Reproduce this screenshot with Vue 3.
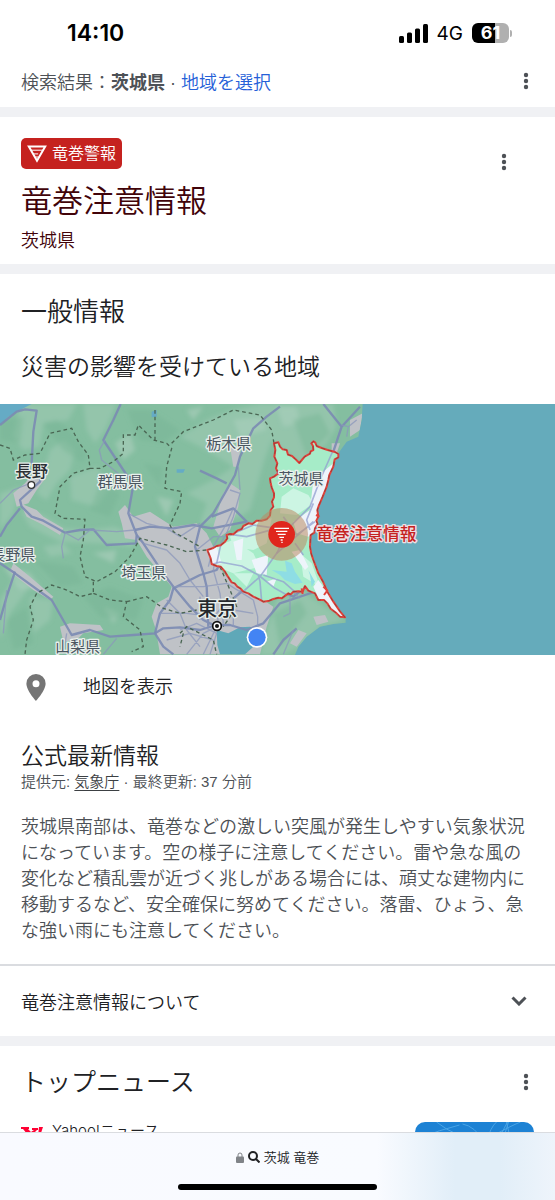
<template>
  <div class="screen">
    <header class="status-bar">
      <span class="clock">14:10</span>
      <div class="status-right">
        <svg class="signal" viewBox="0 0 29 19" aria-hidden="true">
          <rect x="0" y="12" width="5" height="7" rx="1.5" />
          <rect x="8" y="8.5" width="5" height="10.5" rx="1.5" />
          <rect x="16" y="4.5" width="5" height="14.5" rx="1.5" />
          <rect x="24" y="0" width="5" height="19" rx="1.5" />
        </svg>
        <span class="network">4G</span>
        <div class="battery">
          <span class="battery-body">61</span>
          <span class="battery-tip"></span>
        </div>
      </div>
    </header>

    <main class="content">
      <section class="region-bar">
        <p class="region-text">検索結果：<b>茨城県</b> · <a href="#region">地域を選択</a></p>
        <button class="icon-btn" type="button" aria-label="メニュー">
          <svg class="dots" viewBox="0 0 6 18"><circle v-for="y in dots" :key="y" cx="3" :cy="y" r="2.2" /></svg>
        </button>
      </section>

      <section class="alert-card">
        <div class="alert-main">
          <div class="badge">
            <svg class="badge-icon" viewBox="0 0 20 18" aria-hidden="true">
              <path d="M1.8 1.5h16.4L10 15.8z" />
              <path class="badge-bars" d="M4 5.2h12M6.2 8.9h5M8.500 12h3" />
            </svg>
            <span class="badge-text">竜巻警報</span>
          </div>
          <h1 class="alert-title">竜巻注意情報</h1>
          <p class="alert-area">茨城県</p>
        </div>
        <button class="icon-btn alert-menu" type="button" aria-label="メニュー">
          <svg class="dots" viewBox="0 0 6 18"><circle v-for="y in dots" :key="y" cx="3" :cy="y" r="2.2" /></svg>
        </button>
      </section>

      <section class="general">
        <h2 class="general-title">一般情報</h2>
        <h3 class="sub-title">災害の影響を受けている地域</h3>
      </section>

      <svg class="map" viewBox="0 12 1665 753" preserveAspectRatio="xMidYMid slice" role="img" aria-label="茨城県の地図">
        <defs>
          <clipPath id="pref"><path :d="prefecture" /></clipPath>
          <clipPath id="land"><path :d="land" /></clipPath>
          <filter id="soften"><feGaussianBlur stdDeviation="6" /></filter>
        </defs>
        <rect y="0" width="1665" height="780" fill="#65abbb" />
        <path :d="land" fill="#84bea0" />

        <g clip-path="url(#land)">
          <!-- lower ground and valleys -->
          <g filter="url(#soften)">
            <path class="plain" d="M60 12H230L205 60 130 70 120 140 70 150 40 110ZM150 150L190 120 225 150 210 210 170 250 140 300 110 280 130 220ZM250 12H350L315 90 285 130 260 90ZM540 110L620 60 700 30 780 12H1000L1010 80 980 130 900 190 850 150 815 120 790 190 750 330 720 350 640 380 600 370 620 310 560 280 640 240 700 200 620 150ZM210 230L290 200 330 260 290 320 215 300ZM0 280L60 260 40 340 0 390ZM60 330L130 345 190 385 270 390 340 380 400 400 400 440 300 430 180 425 90 380ZM130 440L190 430 215 460 150 470ZM0 600L40 540 90 560 30 640 0 720ZM90 590L160 600 150 660 100 700ZM830 600L900 570 1035 660 960 680 900 740 850 765H780L800 690Z" />
            <path class="plain bright" d="M345 130L390 100 405 150 370 180ZM560 30L610 20 580 60ZM470 290L520 300 500 350ZM10 500L90 520 120 560 60 570ZM280 460L350 450 340 490ZM310 620L360 640 340 670ZM700 60L790 50 800 90 720 110ZM830 20L890 20 900 70 850 80Z" />
            <path class="hill" d="M130 70L170 60 210 90 260 160 250 190 190 150ZM380 30L450 30 540 90 490 130 420 120ZM300 250L360 280 330 350 270 330ZM0 60L70 50 60 130 0 120ZM100 480L220 500 250 550 180 560ZM20 660L80 620 100 730 40 750ZM430 190L490 200 480 260ZM250 590L330 560 430 600 410 660 300 650ZM880 60L960 40 990 100 920 170ZM820 640L900 600 920 640 840 740Z" />
          </g>
          <!-- built-up area -->
          <path class="town" d="M40 280L75 250 125 190 140 230 110 270 85 310 50 320ZM60 310L110 330 130 350 190 385 180 405 130 375 80 350ZM355 335L375 315 400 350 450 335 480 355 520 380 590 370 620 400 640 440 630 470 680 530 740 570 790 600 820 620 800 680 780 763H480L468 690 455 650 470 610 505 590 515 560 490 530 440 470 410 420 375 415 365 370ZM180 680L210 670 300 675 310 690 250 700 230 720 190 725ZM640 380L670 280 690 250 720 270 715 320 690 390 660 410ZM690 140L720 150 715 200 700 200ZM40 490L90 530 160 590 150 600 100 570 30 515ZM940 650L975 645 985 665 950 675ZM895 690L920 700 890 740 870 730ZM1050 60L1088 40 1080 90 1050 110ZM995 130L1020 130 1010 160 995 160Z" />
          <path class="water" d="M0 12H95L50 35 25 50 0 75ZM455 35L470 30 470 50 455 52ZM530 208L555 208 550 218 530 218Z" />
          <path d="M650 690L685 700 720 682 750 680 775 692 785 710 760 740 735 763H660L652 735Z" fill="#5fa8b8" />
        </g>

        <g class="road wide">
          <path d="M0 75L50 35 75 28 110 32 100 95 95 190 125 205 120 245 60 300 65 320 95 350 130 362 195 398 240 390 280 388 320 435 408 430 410 405 385 340 400 255 370 210 310 120 340 60 362 12" />
          <path d="M0 410L20 375 60 325M0 490L45 520 155 600 215 705 270 690 330 710 400 705 465 700 480 640 510 600 520 565 600 525 650 510 660 490 725 498 775 525 825 565 880 590 905 570" />
          <path d="M410 405L430 430 490 520 520 560 570 620 610 660 650 680M405 390L450 380 520 385 580 375 635 385 740 365 700 325 635 350M600 380L585 440 610 520 620 560 625 680" />
          <path d="M720 170L705 225 680 270 640 340 600 380M720 170L760 85 800 50 840 20M700 595L780 530 830 460 890 390 940 310 985 200 1025 80 1080 20M1025 80L970 12M465 700L490 740 520 763M465 700L490 685 540 682 600 690 650 675 690 675 740 690 790 670 840 610 960 570M0 660L20 590 45 515M820 763L850 720 890 685" />
          <path d="M600 212L650 235 680 250" />
        </g>
        <g class="road">
          <path d="M0 310L40 270 90 250M315 120L298 150 305 180 330 200 360 225M195 400L185 440 190 475M195 398L235 420 270 390 350 395 405 390M385 340L440 370 500 385 540 410 600 370M430 430L500 450 540 490 570 540 610 590M690 270L720 280 700 350 680 400 650 450 640 510M700 325L680 370 640 440 625 500M715 200L720 270M740 365L820 385 880 400M640 510L660 580 670 670M520 560L610 560 680 550 760 600 773 650 773 700M590 450L640 410 740 410 830 385M500 600L540 640 560 690 600 740M600 590L600 660M480 640L560 640 640 650 700 630 760 640M310 763L350 715M200 700L190 763M10 700L20 570M560 763L610 700 650 680 610 763M500 720L570 700 640 720M730 560L700 600 700 680M830 530L900 595M900 440L840 380 940 365M960 350L890 390 850 450M1040 110L1045 80 1070 60M1045 80L1025 75M870 590L870 640 850 650M690 590L650 640 660 690M540 690L590 670 650 700 630 763M880 690L850 763M790 530L840 550" />
        </g>
        <g class="border-line">
          <path d="M0 135L30 145 40 180 75 165 120 160 150 100 215 85 235 125 265 165 270 205 300 205 340 185 370 160 370 105 405 105 415 75 460 120 500 130 515 145 500 200 495 265 545 275 540 310 510 375 520 395 600 440M465 30L465 120M515 130L550 95 640 60 700 30 780 45 815 90 822 130M270 205L220 220 180 260 165 340 190 355 255 358 250 420 240 470 255 530 290 545 345 515 390 470 420 415 500 435 560 455 620 450M280 545L280 580 240 590 200 570 155 555 110 580 90 620 100 660 80 720 75 763M280 580L330 600 380 605 370 650 420 690 430 740 395 755M380 605L440 590 490 625 540 640 590 630M540 700L560 680 600 700 640 720 650 763M550 700L540 740M660 500L690 570 710 620 670 680" />
        </g>

        <!-- highlighted prefecture -->
        <path :d="prefecture" fill="#a6ecc8" />
        <g clip-path="url(#pref)">
          <path d="M845 290L880 265 925 285 940 310 890 345 840 340ZM750 365L815 355 800 430 760 450 700 440 690 410ZM640 440L700 420 760 460 780 500 700 520 650 500ZM700 520L760 520 740 560ZM900 460L935 490 960 560 910 530Z" fill="#ccf5e3" />
          <path d="M940 240L1000 190 955 330 955 380 925 410 890 400 880 365 930 330ZM620 445L650 440 665 490 635 495ZM755 480L805 465 800 525 770 520ZM700 425L730 415 725 480 710 480ZM800 545L830 535 820 560ZM955 540L1040 655 1010 650 960 605 940 560ZM875 455L900 450 925 500 915 510Z" fill="#eef4fb" />
          <path d="M815 510L860 515 855 482 875 490 885 515 908 548 885 552 855 540 840 525ZM930 525L925 510 945 545 935 560Z" fill="#8edde4" />
          <g class="road inside">
            <path d="M640 492L660 486 725 498 775 525 825 565 870 590M690 610L780 530 830 460 870 380 930 320 960 240 1000 150M775 525L780 545 785 605" />
            <path d="M690 405L760 375 830 385M650 490L670 400 740 410 830 385M790 525L850 545 890 580M830 460L940 365M850 350L890 405 945 365M885 430L910 465M940 310L920 360 930 390" />
          </g>
        </g>
        <path :d="prefecture" class="outline" />
        <path :d="prefecture" class="outline-dash" />
        <path d="M970 560L982 572 972 585M948 345L958 350M905 565L908 582" class="outline" />

        <circle cx="845" cy="403" r="79" fill="#b98a62" fill-opacity=".55" />
        <circle cx="845" cy="403" r="40" fill="#e0261d" />
        <path d="M823 385H867M828 394H862M833 403H857M838 412H852M842 420H848M844 427H848" class="pin-lines" />

        <circle cx="94" cy="255" r="10" fill="#fff" stroke="#333" stroke-width="4" />
        <circle cx="651" cy="678" r="13" fill="#fff" stroke="#111" stroke-width="5" />
        <circle cx="651" cy="678" r="6" fill="#111" />
        <circle cx="771" cy="712" r="31" fill="#fff" />
        <circle cx="771" cy="712" r="26" fill="#4384f4" />

        <text
          v-for="label in labels"
          :key="label.text"
          :x="label.x"
          :y="label.y"
          class="map-label"
          :class="label.kind"
        >{{ label.text }}</text>
      </svg>

      <a class="show-map" href="#map">
        <svg class="place" viewBox="0 0 20 27" aria-hidden="true">
          <path fill-rule="evenodd" d="M10 0a9.600 9.600 0 0 0-9.600 9.600C.4 16.800 10 27 10 27s9.600-10.200 9.600-17.400A9.600 9.600 0 0 0 10 0zm0 6.200a3.500 3.500 0 1 1 0 7 3.500 3.500 0 0 1 0-7z" />
        </svg>
        地図を表示
      </a>

      <section class="official">
        <h3 class="sub-title">公式最新情報</h3>
        <p class="source">提供元: <a href="#jma">気象庁</a> · 最終更新: 37 分前</p>
        <p class="body-text">茨城県南部は、竜巻などの激しい突風が発生しやすい気象状況になっています。空の様子に注意してください。雷や急な風の変化など積乱雲が近づく兆しがある場合には、頑丈な建物内に移動するなど、安全確保に努めてください。落雷、ひょう、急な強い雨にも注意してください。</p>
      </section>

      <button class="about" type="button">
        <span>竜巻注意情報について</span>
        <svg class="chevron" viewBox="0 0 16 10" aria-hidden="true"><path d="M1.5 1.5L8 8l6.500-6.500" /></svg>
      </button>

      <section class="news">
        <div class="news-head">
          <h2 class="news-title">トップニュース</h2>
          <button class="icon-btn" type="button" aria-label="メニュー">
            <svg class="dots" viewBox="0 0 6 18"><circle v-for="y in dots" :key="y" cx="3" :cy="y" r="2.2" /></svg>
          </button>
        </div>
        <article class="news-item">
          <p class="publisher">
            <svg class="yahoo" viewBox="0 0 22 16" aria-hidden="true">
              <path d="M0 0h8v2H7l3 3 3-2h-2V1h6v2h-1l-5 5v4h2v2H5v-2h2V8L2 2H0zM18 0h4l-3 9h-2zM16 11h3v3h-3z" />
            </svg>
            <span>Yahoo!ニュース</span>
          </p>
          <svg class="thumb" viewBox="0 0 120 100" preserveAspectRatio="xMidYMin slice" aria-hidden="true">
            <rect width="120" height="100" fill="#1d82d4" stroke="none" />
            <path d="M5 16Q25 8 45 3M22 0Q32 8 42 12M48 2Q60 4 70 20M72 20Q76 5 82 0M84 20Q88 8 93 0M87 20Q92 8 94 0M92 0Q94 12 98 20M78 14Q96 4 106 0" />
          </svg>
        </article>
      </section>
    </main>

    <footer class="browser-bar">
      <button class="address" type="button">
        <svg class="lock" viewBox="0 0 8 11" aria-hidden="true">
          <path d="M2 5V3a2 2 0 0 1 4 0v2" />
          <rect y="4.5" width="8" height="6.5" rx="1" />
        </svg>
        <svg class="glass" viewBox="0 0 12 12" aria-hidden="true"><circle cx="5" cy="5" r="4" /><path d="M8 8l3.500 3.500" /></svg>
        茨城 竜巻
      </button>
      <span class="home-line"></span>
    </footer>
  </div>
</template>

<script setup>
const dots = [3, 9, 15]

const labels = [
  { text: '栃木県', x: 686, y: 146, kind: 'pref' },
  { text: '群馬県', x: 361, y: 260, kind: 'pref' },
  { text: '埼玉県', x: 431, y: 533, kind: 'pref' },
  { text: '山梨県', x: 233, y: 756, kind: 'pref' },
  { text: '長野県', x: 38, y: 480, kind: 'pref' },
  { text: '茨城県', x: 903, y: 252, kind: 'pref' },
  { text: '長野', x: 95, y: 231, kind: 'city' },
  { text: '東京', x: 652, y: 649, kind: 'capital' },
  { text: '竜巻注意情報', x: 1099, y: 420, kind: 'warning' }
]

const land = 'M0 12H1088L1085 60 1075 110 1040 125 1015 160 1000 200 985 240 968 290 952 330 955 370 932 405 930 440 940 480 955 520 978 558 1000 605 1037 655V668L1000 672 960 680 920 710 895 740 885 765H0Z'

const prefecture = 'M822 130L835 127 840 140 848 148 860 150 864 164 876 168 885 176 898 189 908 177 914 170 930 161 932 154 940 150 939 138 934 130 940 124 946 128 950 138 965 144 983 150 1005 156 1015 162 1015 172 1004 178 1000 200 988 225 985 240 980 260 968 290 956 318 952 330 955 350 949 362 953 372 945 385 943 398 932 405 930 440 934 462 940 480 955 520 970 547 982 575 1000 605 1020 634 1035 652 1020 650 1010 640 992 626 982 610 972 600 955 600 945 580 925 572 915 558 908 575 895 574 880 575 872 583 865 580 845 595 835 593 820 597 808 602 790 605 778 598 760 590 745 580 730 575 722 566 712 560 704 550 695 547 684 530 675 515 662 500 650 498 635 492 632 475 622 450 640 444 650 438 662 436 675 425 682 415 680 405 690 402 700 403 712 392 725 387 730 378 745 370 757 372 770 362 785 362 800 358 810 347 812 330 820 320 816 305 822 292 822 280 815 262 812 250 810 235 822 230 835 220 828 205 832 190 823 170 826 150Z'
</script>

<style>
body {
  margin: 0;
  background: #fff;
}
</style>

<style scoped>
.screen {
  display: flex;
  flex-direction: column;
  height: 100vh;
  font-family: Inter, 'Noto Sans CJK JP', sans-serif;
  font-weight: 350;
  color: #202124;
  background: #fff;
}

h1,
h2,
h3,
p {
  margin: 0;
  font-weight: 350;
}

button {
  font: inherit;
  color: inherit;
  border: 0;
  padding: 0;
  background: none;
}

.status-bar {
  display: flex;
  justify-content: space-between;
  align-items: center;
  flex: none;
  height: 56px;
  padding: 10px 43px 0 67px;
  box-sizing: border-box;
  color: #000;
}

.clock {
  font-size: 23px;
  font-weight: 600;
}

.status-right {
  display: flex;
  align-items: center;
  gap: 9px;
}

.signal {
  width: 29px;
  height: 19px;
}

.network {
  font-size: 19px;
  font-weight: 400;
}

.battery {
  display: flex;
  align-items: center;
  gap: 1px;
}

.battery-body {
  width: 37px;
  border-radius: 6px;
  background: linear-gradient(90deg, #000 61%, #b0b0b0 61%);
  color: #fff;
  font-size: 18px;
  font-weight: 700;
  line-height: 20px;
  text-align: center;
}

.battery-tip {
  width: 2px;
  height: 7px;
  border-radius: 0 2px 2px 0;
  background: #b0b0b0;
}

.content {
  flex: 1;
  min-height: 0;
  overflow-y: auto;
  scrollbar-width: none;
}

.region-bar {
  display: flex;
  justify-content: space-between;
  align-items: center;
  height: 49px;
  padding: 0 21px 2px;
  border-bottom: 10px solid #f0f1f4;
}

.region-text {
  font-family: 'Liberation Sans', 'Noto Sans CJK JP', sans-serif;
  font-size: 18px;
  color: #4d5156;
}

.region-text b {
  font-weight: 700;
}

.region-text a {
  color: #2560d8;
  text-decoration: none;
}

.icon-btn {
  display: flex;
  justify-content: center;
  width: 16px;
}

.dots {
  width: 6px;
  height: 18px;
  fill: #4d5156;
}

.alert-card {
  display: flex;
  justify-content: space-between;
  padding: 21px 21px 9px;
  border-bottom: 10px solid #f0f1f4;
  color: #410309;
}

.alert-main {
  display: flex;
  flex-direction: column;
  align-items: flex-start;
}

.badge {
  display: flex;
  align-items: center;
  gap: 5px;
  height: 31px;
  padding: 0 6px;
  border-radius: 5px;
  background: #c5221f;
  color: #fff;
  font-size: 16px;
}

.badge-text {
  padding-bottom: 3px;
}

.badge-icon {
  width: 20px;
  height: 18px;
  fill: none;
  stroke: #fff;
  stroke-width: 2;
}

.badge-bars {
  stroke-width: 1;
}

.alert-title {
  margin-top: 8px;
  font-size: 31px;
  line-height: 48px;
}

.alert-area {
  margin-top: 2px;
  font-size: 18px;
  line-height: 28px;
}

.alert-menu {
  align-self: flex-start;
  margin: 15px 22px 0 0;
}

.general {
  padding: 16px 21px 20px;
}

.general-title {
  margin-bottom: 16px;
  font-size: 26px;
  line-height: 44px;
}

.sub-title {
  font-size: 23px;
  line-height: 34px;
}

.map {
  display: block;
  width: 100%;
  height: 251px;
}

.plain {
  fill: #9ac8b0;
  fill-opacity: 0.7;
}

.bright {
  fill: #a6cdb9;
}

.hill {
  fill: #78b596;
  fill-opacity: 0.5;
}

.town {
  fill: #bfc2c7;
}

.water {
  fill: #65abc5;
}

.road {
  fill: none;
  stroke: #8b97bb;
  stroke-width: 4;
  stroke-linejoin: round;
  stroke-opacity: 0.75;
}

.wide {
  stroke: #7b8bb3;
  stroke-width: 7;
  stroke-opacity: 0.9;
}

.inside {
  stroke: #929fd0;
  stroke-width: 5;
}

.border-line {
  fill: none;
  stroke: #4a6653;
  stroke-width: 4;
  stroke-dasharray: 11 9;
}

.outline {
  fill: none;
  stroke: #e2413a;
  stroke-width: 6;
  stroke-linejoin: round;
}

.outline-dash {
  fill: none;
  stroke: #7a3d3a;
  stroke-width: 2;
  stroke-dasharray: 12 9;
}

.pin-lines {
  stroke: #fff;
  stroke-width: 4;
}

.map-label {
  font-size: 45px;
  font-weight: 400;
  text-anchor: middle;
  fill: #4a5560;
  stroke: #e8efec;
  stroke-width: 8;
  stroke-linejoin: round;
  paint-order: stroke;
}

.city {
  font-size: 49px;
  font-weight: 500;
  fill: #2c3035;
}

.capital {
  font-size: 60px;
  font-weight: 500;
  fill: #25282c;
}

.warning {
  font-size: 50px;
  font-weight: 500;
  fill: #c5221f;
  stroke: #efdfe2;
}

.show-map {
  display: flex;
  align-items: center;
  gap: 37px;
  padding: 15px 26px 0;
  font-size: 18px;
  line-height: 34px;
  color: #202124;
  text-decoration: none;
}

.place {
  width: 20px;
  height: 27px;
  fill: #757575;
}

.official {
  padding: 35px 21px 20px;
  border-bottom: 2px solid #dadce0;
}

.source {
  font-family: 'Liberation Sans', 'Noto Sans CJK JP', sans-serif;
  font-size: 15px;
  line-height: 18px;
  color: #4d5156;
}

.source a {
  color: #3c4043;
  text-underline-offset: 3px;
}

.body-text {
  margin-top: 23px;
  font-size: 18px;
  line-height: 26px;
  color: #4d5156;
}

.about {
  display: flex;
  justify-content: space-between;
  align-items: center;
  width: 100%;
  height: 80px;
  padding: 0 28px 0 21px;
  box-sizing: border-box;
  border-bottom: 10px solid #f0f1f4;
  font-size: 18px;
}

.chevron {
  width: 16px;
  height: 10px;
  fill: none;
  stroke: #4d5156;
  stroke-width: 3;
}

.news {
  padding: 18px 21px;
}

.news-head {
  display: flex;
  justify-content: space-between;
  align-items: center;
}

.news-title {
  font-size: 25px;
  line-height: 36px;
}

.news-item {
  display: flex;
  justify-content: space-between;
  align-items: flex-start;
  margin-top: 22px;
}

.publisher {
  display: flex;
  align-items: flex-start;
  gap: 9px;
  font-size: 15px;
  line-height: 18px;
}

.yahoo {
  width: 22px;
  height: 16px;
  margin-top: 5px;
  fill: #f03;
}

.thumb {
  width: 119px;
  height: 100px;
  border-radius: 10px;
  fill: none;
  stroke: #49a4e6;
  stroke-width: 1;
}

.browser-bar {
  display: flex;
  flex-direction: column;
  align-items: center;
  justify-content: space-between;
  flex: none;
  height: 68px;
  padding: 13px 0 10px;
  box-sizing: border-box;
  border-top: 1px solid #dadce0;
  background: linear-gradient(90deg, #f9faff 0%, #f9fbff 68%, #e1eef8 82%, #e1eef8 90%, #eef4fb 100%);
}

.address {
  display: flex;
  align-items: center;
  gap: 4px;
  font-size: 13px;
  line-height: 22px;
}

.lock {
  width: 8px;
  height: 11px;
  fill: #808388;
}

.lock path {
  fill: none;
  stroke: #808388;
  stroke-width: 1;
}

.glass {
  width: 12px;
  height: 12px;
  fill: none;
  stroke: #202124;
  stroke-width: 2;
}

.home-line {
  width: 199px;
  height: 6px;
  border-radius: 3px;
  background: #000;
}
</style>
